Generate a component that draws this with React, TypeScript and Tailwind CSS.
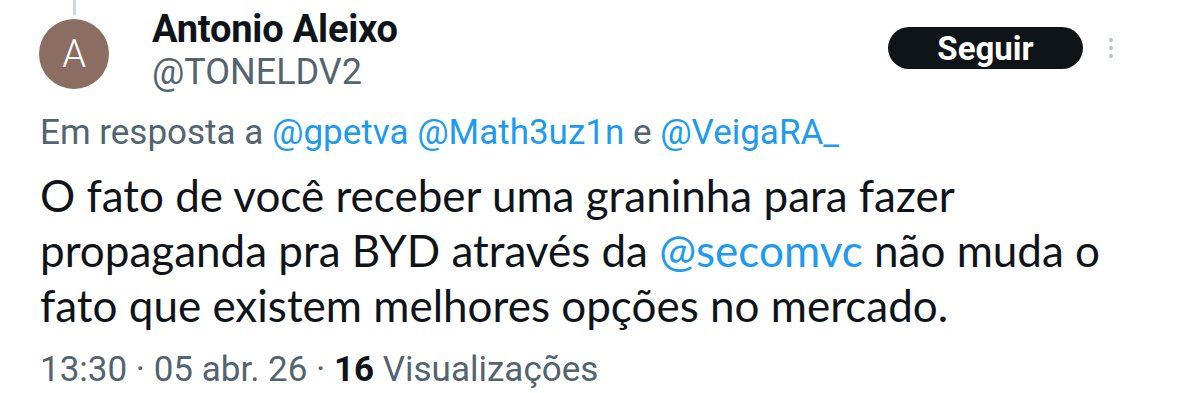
import React from "react";

const Dots = () => (
  <div className="flex flex-col items-center gap-[4px] w-[8px]">
    <span className="block w-[4px] h-[4px] rounded-full bg-[#b9c1c7]" />
    <span className="block w-[4px] h-[4px] rounded-full bg-[#b9c1c7]" />
    <span className="block w-[4px] h-[4px] rounded-full bg-[#b9c1c7]" />
  </div>
);

export default function App() {
  const link = "text-[#1d9bf0]";
  return (
    <div className="w-[1179px] h-[393px] bg-white overflow-hidden font-['Roboto',sans-serif] text-[#0f1419]">
      <div className="flex items-start pl-[39px] pr-[64px]">
        <div className="flex flex-col items-center w-[70px]">
          <div className="w-[3px] h-[15px] bg-[#cfd9de]" />
          <div className="mt-[4px] w-[70px] h-[70px] rounded-full bg-[#8b6d62] flex items-center justify-center">
            <span className="text-white text-[38px] font-light leading-none">A</span>
          </div>
        </div>
        <div className="ml-[43px] pt-[8px] flex-1 flex flex-col">
          <span className="text-[38px] font-bold leading-[42px] tracking-[-0.2px]">Antonio Aleixo</span>
          <span className="text-[36px] text-[#536471] leading-[44px]">@TONELDV2</span>
        </div>
        <div className="flex items-center gap-[24px] pt-[27px]">
          <button className="w-[195px] h-[42px] rounded-full bg-[#0f1419] text-white text-[33px] font-bold leading-none">
            Seguir
          </button>
          <Dots />
        </div>
      </div>

      <div className="pl-[40px] mt-[18px]">
        <p className="text-[35px] leading-[42px] text-[#536471]">
          Em resposta a <span className={link}>@gpetva</span> <span className={link}>@Math3uz1n</span> e{" "}
          <span className={link}>@VeigaRA_</span>
        </p>
        <p className="mt-[14px] w-[1100px] text-[44px] leading-[55px] font-['Lato',sans-serif]">
          O fato de você receber uma graninha para fazer propaganda pra BYD através da{" "}
          <span className={link}>@secomvc</span> não muda o fato que existem melhores opções no mercado.
        </p>
        <p className="mt-[16px] text-[35px] leading-[42px] text-[#536471]">
          13:30 · 05 abr. 26 · <span className="font-bold text-[#0f1419]">16</span> Visualizações
        </p>
      </div>
    </div>
  );
}
